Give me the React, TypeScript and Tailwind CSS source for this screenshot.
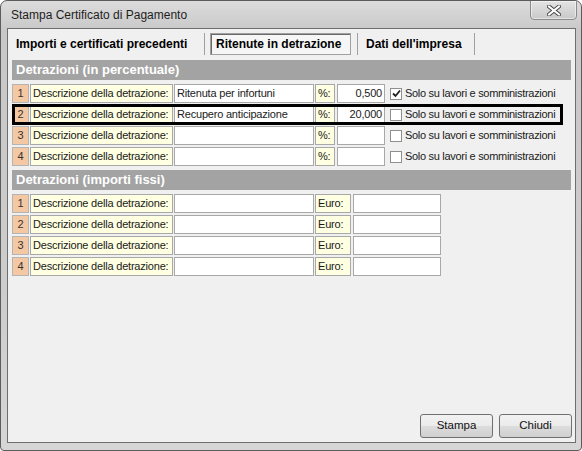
import React from 'react';

const font = { fontFamily: '"Liberation Sans", Arial, sans-serif' };

function Checkbox({ checked }: { checked?: boolean }) {
  return (
    <span className="w-[12px] h-[12px] border border-[#8e8f8f] bg-white flex items-center justify-center shrink-0">
      {checked && (
        <svg width="9" height="9" viewBox="0 0 9 9">
          <path d="M1 4.5 L3.5 7 L8 1.5" stroke="#1f1f1f" strokeWidth="1.8" fill="none" />
        </svg>
      )}
    </span>
  );
}

function NumCell({ n }: { n: number }) {
  return (
    <div className="w-[17px] h-full bg-[#f3c8a3] border border-[#b4b4b4] flex items-center justify-center text-[#333] shrink-0">
      {n}
    </div>
  );
}

function Label({ text, w }: { text: string; w: string }) {
  return (
    <div className={`${w} h-full bg-[#ffffe1] border border-[#a8a8a8] flex items-center pl-[2px] shrink-0`}>
      {text}
    </div>
  );
}

type PercRow = { n: number; desc: string; val: string; checked: boolean; marked?: boolean };

const percRows: PercRow[] = [
  { n: 1, desc: 'Ritenuta per infortuni', val: '0,500', checked: true },
  { n: 2, desc: 'Recupero anticipazione', val: '20,000', checked: false, marked: true },
  { n: 3, desc: '', val: '', checked: false },
  { n: 4, desc: '', val: '', checked: false },
];

export default function App() {
  return (
    <div
      className="w-[582px] h-[451px] flex flex-col border border-[#5c5c5c] rounded-t-[7px] rounded-b-[4px] bg-[linear-gradient(to_bottom,#dcdcdc,#c8c8c8_30px,#cdcdcd_300px,#d6d6d6)] relative overflow-hidden text-[11px] tracking-[-0.2px] text-[#1a1a1a]"
      style={font}
    >
      {/* title bar */}
      <div className="h-[27px] flex items-center pl-[10px] text-[12px] tracking-normal text-[#1e1e1e] shrink-0">
        Stampa Certificato di Pagamento
      </div>
      <div className="absolute top-[-1px] right-[4px] w-[47px] h-[20px] rounded-b-[4px] border border-[#8a8a8a] bg-[linear-gradient(to_bottom,#e4e4e4,#c9c9c9)] shadow-[inset_0_0_0_1px_rgba(255,255,255,0.5)] flex items-center justify-center">
        <svg width="14" height="11" viewBox="0 0 14 11">
          <path d="M2 1.5 L12 9.5 M12 1.5 L2 9.5" stroke="#4a4a4a" strokeWidth="4" strokeLinecap="square" />
          <path d="M2 1.5 L12 9.5 M12 1.5 L2 9.5" stroke="#ffffff" strokeWidth="2" strokeLinecap="square" />
        </svg>
      </div>

      {/* client area */}
      <div className="flex-1 ml-[6px] mr-[5px] border border-[#6e6e6e] bg-[#f0f0f0] flex flex-col">
        {/* tabs */}
        <div className="h-[31px] pt-[4px] flex items-start shrink-0 text-[12px] font-bold tracking-normal text-black">
          <div className="w-[196px] h-[22px] pl-[8px] flex items-center">Importi e certificati precedenti</div>
          <div className="w-px h-[22px] bg-[#a0a0a0]" />
          <div className="ml-[5px] w-[141px] h-[22px] pl-[5px] flex items-center border border-[#a0a0a0] shadow-[inset_1px_1px_0_#6a6a6a] bg-[#f6f6f6]">
            Ritenute in detrazione
          </div>
          <div className="ml-[6px] w-px h-[22px] bg-[#a0a0a0]" />
          <div className="w-[116px] h-[22px] pl-[8px] flex items-center">Dati dell'impresa</div>
          <div className="w-px h-[22px] bg-[#a0a0a0]" />
        </div>

        {/* percentuale */}
        <div className="mx-[4px] h-[20px] bg-[#a3a3a3] text-white font-bold text-[13px] tracking-normal flex items-center pl-[4px]">
          Detrazioni (in percentuale)
        </div>
        <div className="flex flex-col gap-[2px] mt-[4px] px-[4px]">
          {percRows.map((r) => (
            <div key={r.n} className="relative h-[19px] flex items-center">
              <NumCell n={r.n} />
              <div className="ml-[1px] h-full">
                <Label text="Descrizione della detrazione:" w="w-[143px]" />
              </div>
              <div className="ml-[1px] w-[140px] h-full bg-white border border-[#a8a8a8] flex items-center pl-[2px]">
                {r.desc}
              </div>
              <div className="ml-[1px] h-full">
                <Label text="%:" w="w-[20px]" />
              </div>
              <div className="ml-[2px] w-[48px] h-full bg-white border border-[#a8a8a8] flex items-center justify-end pr-[2px]">
                {r.val}
              </div>
              <div className="ml-[5px]">
                <Checkbox checked={r.checked} />
              </div>
              <span className="ml-[3px] tracking-[-0.3px]">Solo su lavori e somministrazioni</span>
              {r.marked && (
                <div className="absolute left-0 top-[-1px] w-[551px] h-[21px] border-[3px] border-black pointer-events-none" />
              )}
            </div>
          ))}
        </div>

        {/* importi fissi */}
        <div className="mx-[4px] mt-[4px] h-[20px] bg-[#a3a3a3] text-white font-bold text-[13px] tracking-normal flex items-center pl-[4px]">
          Detrazioni (importi fissi)
        </div>
        <div className="flex flex-col gap-[2px] mt-[4px] px-[4px]">
          {[1, 2, 3, 4].map((n) => (
            <div key={n} className="h-[19px] flex items-center">
              <NumCell n={n} />
              <div className="ml-[1px] h-full">
                <Label text="Descrizione della detrazione:" w="w-[143px]" />
              </div>
              <div className="ml-[1px] w-[140px] h-full bg-white border border-[#a8a8a8]" />
              <div className="ml-[1px] h-full">
                <Label text="Euro:" w="w-[36px]" />
              </div>
              <div className="ml-[2px] w-[88px] h-full bg-white border border-[#a8a8a8]" />
            </div>
          ))}
        </div>

        {/* buttons */}
        <div className="mt-auto mb-[4px] mr-[3px] flex justify-end gap-[6px] tracking-normal text-[11.5px]">
          {['Stampa', 'Chiudi'].map((b) => (
            <div
              key={b}
              className="w-[73px] h-[24px] rounded-[3px] border border-[#707070] bg-[linear-gradient(to_bottom,#f2f2f2,#ebebeb_50%,#dddddd_51%,#cfcfcf)] flex items-center justify-center text-[#111]"
            >
              {b}
            </div>
          ))}
        </div>
      </div>
      <div className="h-[7px] shrink-0" />
    </div>
  );
}
